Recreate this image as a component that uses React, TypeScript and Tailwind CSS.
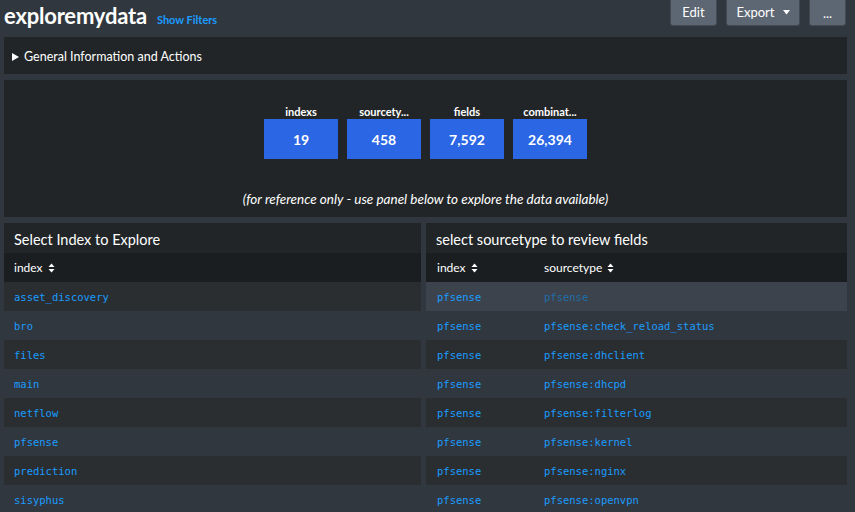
import React from 'react';

const indexes = [
  'asset_discovery',
  'bro',
  'files',
  'main',
  'netflow',
  'pfsense',
  'prediction',
  'sisyphus',
];

const sourcetypes = [
  'pfsense',
  'pfsense:check_reload_status',
  'pfsense:dhclient',
  'pfsense:dhcpd',
  'pfsense:filterlog',
  'pfsense:kernel',
  'pfsense:nginx',
  'pfsense:openvpn',
];

const kpis = [
  { label: 'indexs', value: '19' },
  { label: 'sourcety...', value: '458' },
  { label: 'fields', value: '7,592' },
  { label: 'combinat...', value: '26,394' },
];

const sans = "font-['Lato','Open_Sans',sans-serif]";
const mono = "font-['DejaVu_Sans_Mono',monospace]";

function SortIcon() {
  return (
    <svg width="7" height="10" viewBox="0 0 7 10" className="ml-[5px] inline-block">
      <path d="M3.5 0.5 L6.5 4 L0.5 4 Z" fill="currentColor" />
      <path d="M3.5 9.5 L6.5 6 L0.5 6 Z" fill="currentColor" />
    </svg>
  );
}

function Header() {
  return (
    <div className="flex h-[37px] items-start justify-between pl-1 pr-[9px]">
      <div className="flex items-baseline gap-[10px] pt-[1px]">
        <h1 className="text-[22px] font-bold leading-[30px] tracking-[-0.2px] text-white">exploremydata</h1>
        <a className="text-[11px] font-bold text-[#1a9cff]">Show Filters</a>
      </div>
      <div className="flex gap-[9px]">
        <button className="h-[26px] w-[47px] rounded-b-[3px] border border-t-0 border-[#434a53] bg-[#5c6773] text-[13px] text-white">
          Edit
        </button>
        <button className="flex h-[26px] w-[74px] items-center justify-center gap-[8px] rounded-b-[3px] border border-t-0 border-[#434a53] bg-[#5c6773] text-[13px] text-white">
          Export
          <svg width="7" height="5" viewBox="0 0 7 5">
            <path d="M0 0 L7 0 L3.5 4.5 Z" fill="white" />
          </svg>
        </button>
        <button className="h-[26px] w-[37px] rounded-b-[3px] border border-t-0 border-[#434a53] bg-[#5c6773] pt-[2px] text-[13px] leading-none text-white">
          ...
        </button>
      </div>
    </div>
  );
}

function Kpis() {
  return (
    <div className="flex h-[137px] flex-col items-center bg-[#212527] pt-[24px]">
      <div className="flex gap-[9px]">
        {kpis.map((k) => (
          <div key={k.label} className="flex w-[74px] flex-col items-center">
            <span className="text-[11px] font-bold leading-[15px] text-white">{k.label}</span>
            <div className="flex h-[40px] w-[74px] items-center justify-center bg-[#2b66e4] text-[14px] font-bold text-white">
              {k.value}
            </div>
          </div>
        ))}
      </div>
      <p className="mt-[31px] text-[13.5px] italic leading-[18px] text-white">
        (for reference only - use panel below to explore the data available)
      </p>
    </div>
  );
}

function IndexPanel() {
  return (
    <div className="flex-1 bg-[#212527]">
      <div className="flex h-[30px] items-center px-[10px] pt-[3px] text-[14.5px] text-white">
        Select Index to Explore
      </div>
      <div className="flex h-[29px] items-center bg-[#1a1e21] px-[10px] text-[12px] text-white">
        index
        <SortIcon />
      </div>
      {indexes.map((name, i) => (
        <div
          key={name}
          className={`flex h-[29px] items-center px-[10px] pt-[2px] text-[10.5px] text-[#1a9cff] ${mono} ${
            i % 2 === 0 ? 'bg-[#2a2e31]' : 'bg-[#31373e]'
          }`}
        >
          {name}
        </div>
      ))}
    </div>
  );
}

function SourcetypePanel() {
  return (
    <div className="w-[421px] bg-[#212527]">
      <div className="flex h-[30px] items-center px-[10px] pt-[3px] text-[14.5px] text-white">
        select sourcetype to review fields
      </div>
      <div className="flex h-[29px] items-center bg-[#1a1e21] text-[12px] text-white">
        <div className="flex w-[107px] items-center pl-[11px]">
          index
          <SortIcon />
        </div>
        <div className="flex items-center pl-[11px]">
          sourcetype
          <SortIcon />
        </div>
      </div>
      {sourcetypes.map((st, i) => (
        <div
          key={st}
          className={`flex h-[29px] items-center pt-[2px] text-[10.5px] ${mono} ${
            i === 0 ? 'bg-[#3c434c]' : i % 2 === 0 ? 'bg-[#2a2e31]' : 'bg-[#31373e]'
          }`}
        >
          <div className="w-[107px] pl-[11px] text-[#1a9cff]">pfsense</div>
          <div className={`pl-[11px] ${i === 0 ? 'text-[#1f6ea8]' : 'text-[#1a9cff]'}`}>{st}</div>
        </div>
      ))}
    </div>
  );
}

export default function App() {
  return (
    <div className={`h-[512px] w-[855px] overflow-hidden bg-[#31373e] ${sans}`}>
      <Header />
      <div className="flex flex-col gap-[6px] pl-1 pr-2">
        <div className="flex h-[37px] items-center bg-[#212527] px-[8px] pt-[3px] text-[12.5px] text-white">
          <svg width="7" height="8" viewBox="0 0 7 8" className="mr-[5px]">
            <path d="M0 0 L7 4 L0 8 Z" fill="white" />
          </svg>
          General Information and Actions
        </div>
        <Kpis />
        <div className="flex gap-[5px]">
          <IndexPanel />
          <SourcetypePanel />
        </div>
      </div>
    </div>
  );
}
